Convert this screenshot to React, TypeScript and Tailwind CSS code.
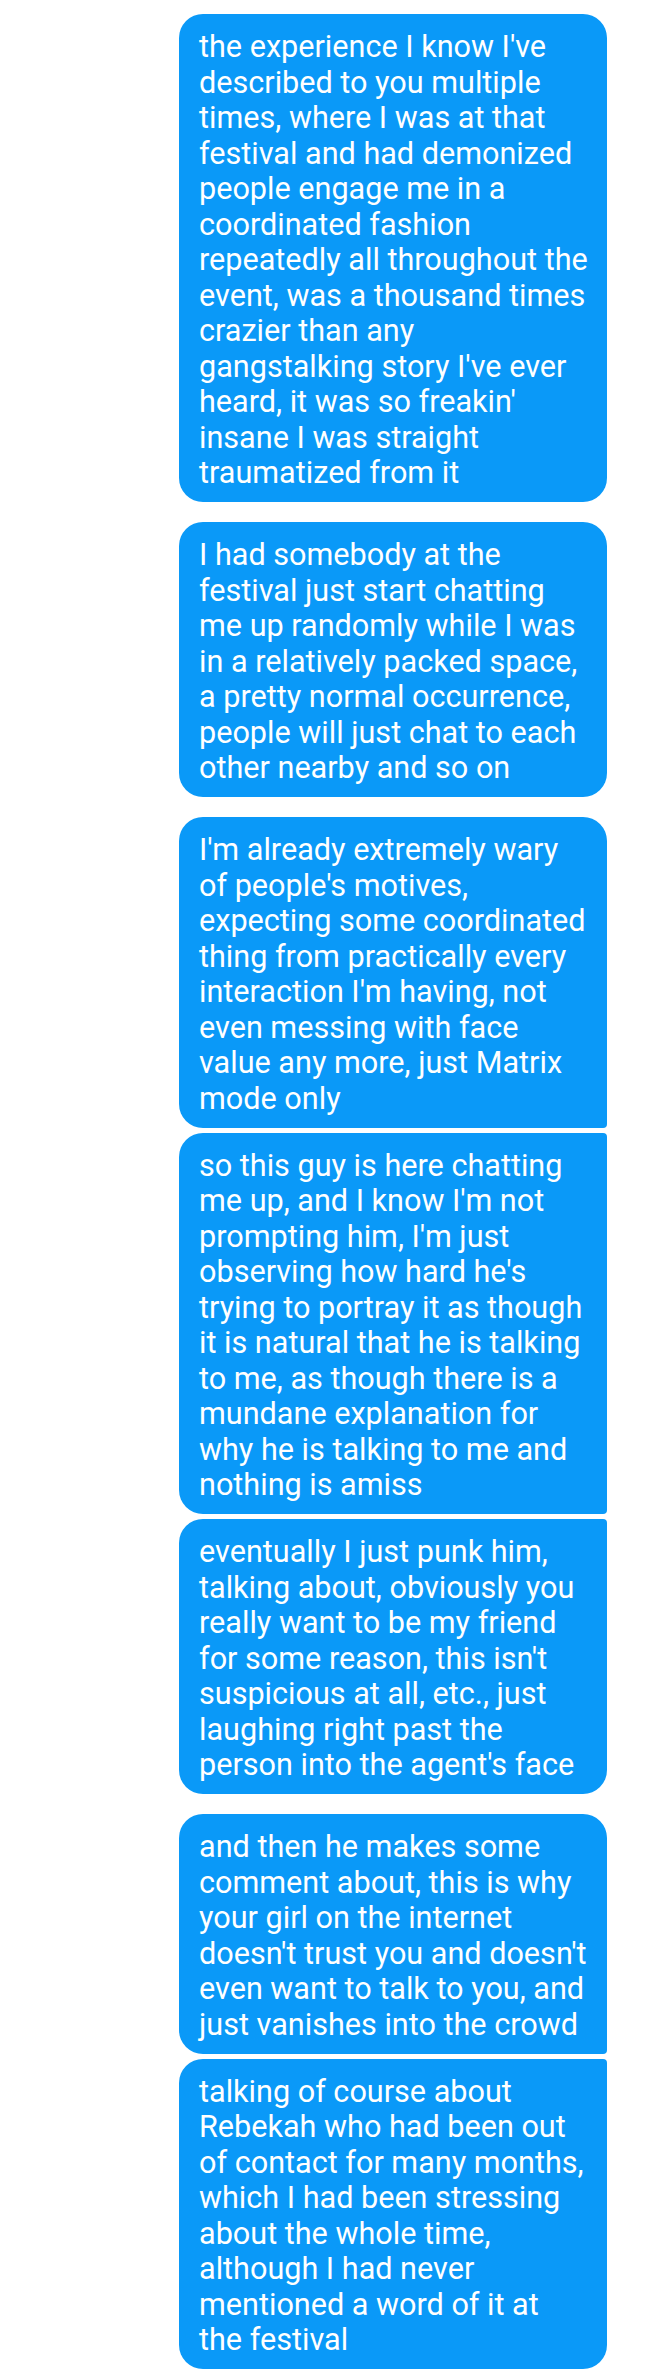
const messages: { lines: string[]; top: "round" | "flat"; bottom: "round" | "flat"; gap: "group" | "apart" }[] = [
  {
    lines: [
      "the experience I know I've",
      "described to you multiple",
      "times, where I was at that",
      "festival and had demonized",
      "people engage me in a",
      "coordinated fashion",
      "repeatedly all throughout the",
      "event, was a thousand times",
      "crazier than any",
      "gangstalking story I've ever",
      "heard, it was so freakin'",
      "insane I was straight",
      "traumatized from it",
    ],
    top: "round",
    bottom: "round",
    gap: "apart",
  },
  {
    lines: [
      "I had somebody at the",
      "festival just start chatting",
      "me up randomly while I was",
      "in a relatively packed space,",
      "a pretty normal occurrence,",
      "people will just chat to each",
      "other nearby and so on",
    ],
    top: "round",
    bottom: "round",
    gap: "apart",
  },
  {
    lines: [
      "I'm already extremely wary",
      "of people's motives,",
      "expecting some coordinated",
      "thing from practically every",
      "interaction I'm having, not",
      "even messing with face",
      "value any more, just Matrix",
      "mode only",
    ],
    top: "round",
    bottom: "flat",
    gap: "apart",
  },
  {
    lines: [
      "so this guy is here chatting",
      "me up, and I know I'm not",
      "prompting him, I'm just",
      "observing how hard he's",
      "trying to portray it as though",
      "it is natural that he is talking",
      "to me, as though there is a",
      "mundane explanation for",
      "why he is talking to me and",
      "nothing is amiss",
    ],
    top: "flat",
    bottom: "flat",
    gap: "group",
  },
  {
    lines: [
      "eventually I just punk him,",
      "talking about, obviously you",
      "really want to be my friend",
      "for some reason, this isn't",
      "suspicious at all, etc., just",
      "laughing right past the",
      "person into the agent's face",
    ],
    top: "flat",
    bottom: "round",
    gap: "group",
  },
  {
    lines: [
      "and then he makes some",
      "comment about, this is why",
      "your girl on the internet",
      "doesn't trust you and doesn't",
      "even want to talk to you, and",
      "just vanishes into the crowd",
    ],
    top: "round",
    bottom: "flat",
    gap: "apart",
  },
  {
    lines: [
      "talking of course about",
      "Rebekah who had been out",
      "of contact for many months,",
      "which I had been stressing",
      "about the whole time,",
      "although I had never",
      "mentioned a word of it at",
      "the festival",
    ],
    top: "flat",
    bottom: "round",
    gap: "group",
  },
];

export default function App() {
  return (
    <div className="flex min-h-screen w-full flex-col bg-white pb-[10px] pt-[14px] font-['Roboto',sans-serif]">
      {messages.map((msg, i) => (
        <Bubble key={i} {...msg} first={i === 0} />
      ))}
    </div>
  );
}

const Bubble = ({
  lines,
  top,
  bottom,
  gap,
  first,
}: {
  lines: string[];
  top: "round" | "flat";
  bottom: "round" | "flat";
  gap: "group" | "apart";
  first: boolean;
}) => {
  return (
    <div
      className={`ml-[179px] w-[428px] rounded-l-[24px] bg-[#0a99f8] pb-[11.5px] pl-[20px] pr-[10px] pt-[15px] text-[30.6px] leading-[35.5px] text-white ${
        top === "round" ? "rounded-tr-[24px]" : "rounded-tr-[4px]"
      } ${bottom === "round" ? "rounded-br-[24px]" : "rounded-br-[4px]"} ${
        first ? "" : gap === "group" ? "mt-[5px]" : "mt-[20px]"
      }`}
    >
      {lines.map((line, j) => (
        <div key={j} className="whitespace-nowrap">
          {line}
        </div>
      ))}
    </div>
  );
};
